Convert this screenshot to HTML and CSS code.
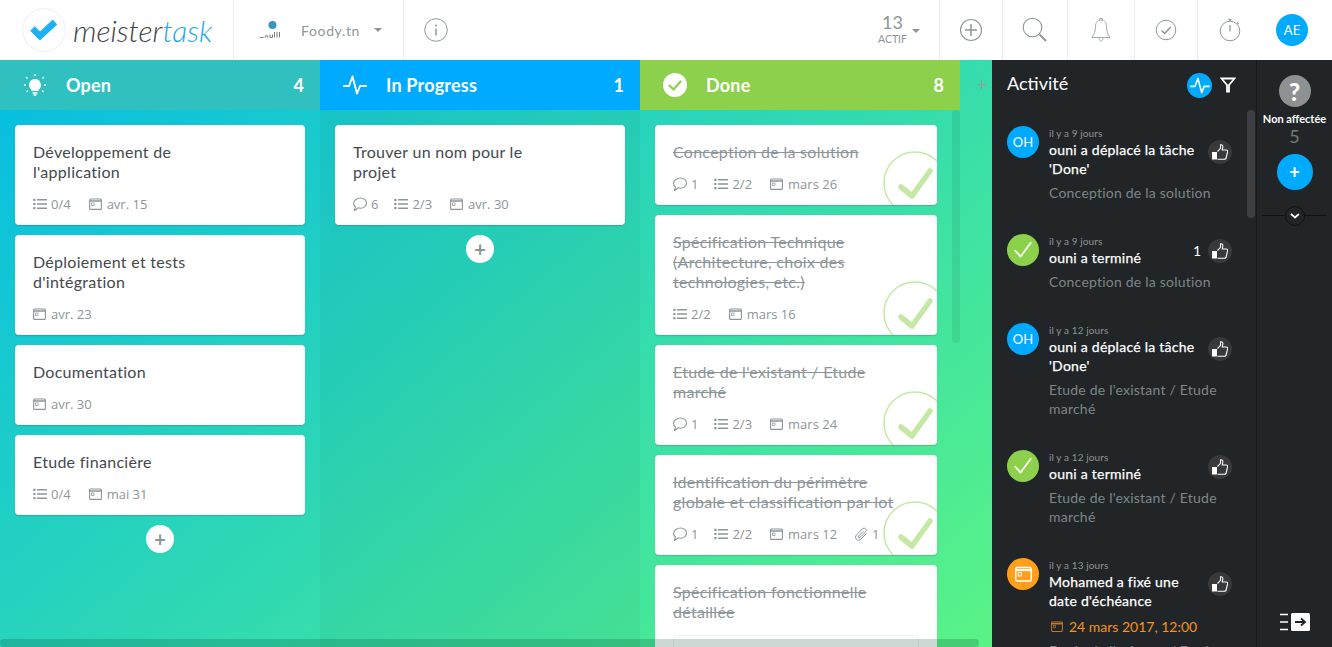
FILE: index.html
```html
<!DOCTYPE html>
<html lang="fr">
<head>
<meta charset="utf-8">
<title>MeisterTask</title>
<link rel="stylesheet" href="styles.css">
</head>
<body>
<svg class="defs" width="0" height="0">
  <defs>
    <symbol id="i-comment" viewBox="0 0 14 14"><path d="M7.500 1c3.100 0 6 2.100 6 5.200s-2.900 5-6 5c-.8 0-1.500-.1-2.200-.4L1.500 13.500l.9-3.700C1.200 8.900.6 7.600.6 6.200.6 3.100 4.400 1 7.500 1z" fill="none" stroke="currentColor" stroke-width="1.100"/></symbol>
    <symbol id="i-list" viewBox="0 0 14 12"><path d="M4 1.800h10M4 6h10M4 10.200h10" stroke="currentColor" stroke-width="1.500" fill="none"/><path d="M.3.800h2.200V3H.3zM.3 4.900h2.200v2.200H.3zM.3 9h2.200v2.200H.3z" fill="currentColor"/></symbol>
    <symbol id="i-cal" viewBox="0 0 13 12"><rect x=".6" y="1" width="11.800" height="10.400" rx="1" fill="none" stroke="currentColor" stroke-width="1.100"/><path d="M.6 3h11.800" stroke="currentColor" stroke-width="1.600"/><rect x="2.500" y="5" width="2.500" height="2.500" fill="none" stroke="currentColor" stroke-width=".7"/></symbol>
    <symbol id="i-clip" viewBox="0 0 14 14"><path d="M12.500 6.500 7 12c-1.300 1.300-3.400 1.500-4.600.3S1.300 9 2.600 7.800l5.700-5.900c1-.9 2.400-1 3.300-.1s.8 2.200-.1 3.100L6 10.500c-.4.400-1.100.5-1.500.1s-.3-1.100.1-1.500l4.900-5" fill="none" stroke="currentColor" stroke-width="1"/></symbol>
    <symbol id="i-thumb" viewBox="0 0 16 16"><path d="M0 8h5v7.500H0z" fill="currentColor"/><path d="M5.500 7.500 8.500 4.300V.9c1.500-.4 2.500.6 2.300 2.100L10.300 6h4c1.100 0 1.600.9 1.300 1.800l-1.500 6.200c-.2.800-.7 1.200-1.500 1.200H5.500" fill="none" stroke="currentColor" stroke-width="1.100"/></symbol>
    <symbol id="i-pulse" viewBox="0 0 24 20"><path d="M1 11h5l3.500-9.500 4.500 17 3-7.500h6" fill="none" stroke="currentColor" stroke-width="1.900" stroke-linecap="round" stroke-linejoin="round"/></symbol>
    <symbol id="i-done" viewBox="0 0 64 64"><circle cx="32" cy="32" r="31" fill="none" stroke="currentColor" stroke-width="1.500"/><path d="M18 36l11 9 18-25" fill="none" stroke="currentColor" stroke-width="5.500" stroke-linecap="round" stroke-linejoin="round"/></symbol>
    <symbol id="i-check" viewBox="0 0 20 20"><path d="M3.500 10.500l4.500 5L16.500 4" fill="none" stroke="currentColor" stroke-width="1.400" stroke-linecap="round" stroke-linejoin="round"/></symbol>
  </defs>
</svg>
<div class="app">
  <header class="topbar">
    <div class="brand">
      <span class="logo-mark">
        <svg viewBox="0 0 44 44" width="44" height="44"><circle cx="22" cy="22" r="21.300" fill="#fff" stroke="#eceef0"/><path d="M10.500 20.500l7.500 7.500 15-14" fill="none" stroke="#1cb0f6" stroke-width="6.500" stroke-linejoin="miter"/></svg>
      </span>
      <span class="wordmark">meister<span class="wordmark-task">task</span></span>
    </div>
    <div class="project">
      <svg class="project-logo" viewBox="0 0 22 18" width="22" height="18"><circle cx="13.500" cy="4" r="4" fill="#3a94bd"/><path d="M1 16.500h3.500M6 16.500c.5-3 2-3 2-1.500s1 1.500 1 0M11 13.500v3h2.500v-3M15.500 11v5.500M18 11v5.500M20.500 11v5.500" stroke="#777c80" stroke-width="1" fill="none"/></svg>
      <span class="project-name">Foody.tn</span>
      <span class="caret"></span>
    </div>
    <div class="info-cell">
      <svg viewBox="0 0 24 24" width="24" height="24"><circle cx="12" cy="12" r="11.300" fill="none" stroke="#8f979b" stroke-width="1"/><path d="M12 10.500v7" stroke="#8f979b" stroke-width="1.500"/><circle cx="12" cy="7.500" r="1" fill="#8f979b"/></svg>
      <span class="active-num"><b class="active-count">13</b><small class="active-label">ACTIF</small></span>
      <span class="caret active-caret"></span>
    </div>
    <div class="tool tool-plus">
      <svg viewBox="0 0 24 24" width="24" height="24"><circle cx="12" cy="12" r="10.500" fill="none" stroke="#8f979b" stroke-width="1.100"/><path d="M12 6v12M6 12h12" stroke="#8f979b" stroke-width="1.500"/></svg>
    </div>
    <div class="tool tool-search">
      <svg viewBox="0 0 26 26" width="26" height="26"><circle cx="10.500" cy="10.500" r="9.300" fill="none" stroke="#8f979b" stroke-width="1.100"/><path d="M17.500 17.500l6.500 6.500" stroke="#8f979b" stroke-width="2"/></svg>
    </div>
    <div class="tool tool-bell">
      <svg viewBox="0 0 20 26" width="20" height="26"><path d="M10 3c-3.500 0-5.500 2.500-5.500 6.500 0 5-1.500 8-3.500 11h18c-2-3-3.500-6-3.500-11C15.500 5.500 13.500 3 10 3zM8.500 3V1.500h3V3M8 21c0 2 1 3 2 3s2-1 2-3" fill="none" stroke="#a3aaae" stroke-width="1"/></svg>
    </div>
    <div class="tool tool-check">
      <svg viewBox="0 0 22 22" width="22" height="22"><circle cx="11" cy="11" r="9.800" fill="none" stroke="#8f979b" stroke-width="1"/><path d="M6.500 11.500l3.200 3 6-6.500" fill="none" stroke="#8f979b" stroke-width="1.500"/></svg>
    </div>
    <div class="tool tool-timer">
      <svg viewBox="0 0 22 24" width="22" height="24"><circle cx="11" cy="13" r="9.800" fill="none" stroke="#8f979b" stroke-width="1"/><path d="M11 7v6.500" stroke="#8f979b" stroke-width="1.300"/><path d="M9.500 1.500h3M11 1.500v1.500M18 4.500l1.500 1.500" stroke="#8f979b" stroke-width="1.300"/></svg>
    </div>
    <div class="tool tool-user"><span class="avatar avatar-blue">AE</span></div>
  </header>

  <main class="workspace">
    <section class="board">
      <div class="column">
        <div class="col-head col-open">
          <svg class="col-icon" viewBox="0 0 24 24" width="24" height="24"><path d="M12 6a6 6 0 0 0-3.500 10.800V18h7v-1.200A6 6 0 0 0 12 6z" fill="#fff"/><path d="M9.500 20h5M10.500 22h3M12 1v2M3 4l1.500 1.500M21 4l-1.500 1.500M1 12h2M21 12h2M3.500 19l1.500-1.500M20.500 19 19 17.500" stroke="#fff" stroke-width="1.300" fill="none"/></svg>
          <h2 class="col-title">Open</h2><span class="col-count">4</span>
        </div>
        <div class="col-body">
          <article class="card">
            <h3 class="card-title">Développement de<br>l'application</h3>
            <div class="meta"><span class="m"><svg class="mi"><use href="#i-list"/></svg>0/4</span><span class="m"><svg class="mi mi-cal"><use href="#i-cal"/></svg>avr. 15</span></div>
          </article>
          <article class="card">
            <h3 class="card-title">Déploiement et tests<br>d'intégration</h3>
            <div class="meta"><span class="m"><svg class="mi mi-cal"><use href="#i-cal"/></svg>avr. 23</span></div>
          </article>
          <article class="card">
            <h3 class="card-title">Documentation</h3>
            <div class="meta"><span class="m"><svg class="mi mi-cal"><use href="#i-cal"/></svg>avr. 30</span></div>
          </article>
          <article class="card">
            <h3 class="card-title">Etude financière</h3>
            <div class="meta"><span class="m"><svg class="mi"><use href="#i-list"/></svg>0/4</span><span class="m"><svg class="mi mi-cal"><use href="#i-cal"/></svg>mai 31</span></div>
          </article>
          <button class="add-card" type="button">+</button>
        </div>
      </div>

      <div class="column column-alt">
        <div class="col-head col-progress">
          <svg class="col-icon" width="24" height="20"><use href="#i-pulse"/></svg>
          <h2 class="col-title">In Progress</h2><span class="col-count">1</span>
        </div>
        <div class="col-body">
          <article class="card">
            <h3 class="card-title">Trouver un nom pour le<br>projet</h3>
            <div class="meta"><span class="m"><svg class="mi"><use href="#i-comment"/></svg>6</span><span class="m"><svg class="mi"><use href="#i-list"/></svg>2/3</span><span class="m"><svg class="mi mi-cal"><use href="#i-cal"/></svg>avr. 30</span></div>
          </article>
          <button class="add-card" type="button">+</button>
        </div>
      </div>

      <div class="column column-done">
        <div class="col-head col-done">
          <svg class="col-icon" viewBox="0 0 24 24" width="24" height="24"><circle cx="12" cy="12" r="12" fill="#fff"/><path d="M6.500 12.500l4 4 7-8" fill="none" stroke="#8cd04b" stroke-width="2.200" stroke-linecap="round" stroke-linejoin="round"/></svg>
          <h2 class="col-title">Done</h2><span class="col-count">8</span>
        </div>
        <div class="col-body col-body-done">
          <article class="card card-done">
            <h3 class="card-title">Conception de la solution</h3>
            <div class="meta"><span class="m"><svg class="mi"><use href="#i-comment"/></svg>1</span><span class="m"><svg class="mi"><use href="#i-list"/></svg>2/2</span><span class="m"><svg class="mi mi-cal"><use href="#i-cal"/></svg>mars 26</span></div>
            <svg class="done-mark"><use href="#i-done"/></svg>
          </article>
          <article class="card card-done">
            <h3 class="card-title">Spécification Technique<br>(Architecture, choix des<br>technologies, etc.)</h3>
            <div class="meta"><span class="m"><svg class="mi"><use href="#i-list"/></svg>2/2</span><span class="m"><svg class="mi mi-cal"><use href="#i-cal"/></svg>mars 16</span></div>
            <svg class="done-mark"><use href="#i-done"/></svg>
          </article>
          <article class="card card-done">
            <h3 class="card-title">Etude de l'existant / Etude<br>marché</h3>
            <div class="meta"><span class="m"><svg class="mi"><use href="#i-comment"/></svg>1</span><span class="m"><svg class="mi"><use href="#i-list"/></svg>2/3</span><span class="m"><svg class="mi mi-cal"><use href="#i-cal"/></svg>mars 24</span></div>
            <svg class="done-mark"><use href="#i-done"/></svg>
          </article>
          <article class="card card-done">
            <h3 class="card-title">Identification du périmètre<br>globale et classification par lot</h3>
            <div class="meta"><span class="m"><svg class="mi"><use href="#i-comment"/></svg>1</span><span class="m"><svg class="mi"><use href="#i-list"/></svg>2/2</span><span class="m"><svg class="mi mi-cal"><use href="#i-cal"/></svg>mars 12</span><span class="m m-clip"><svg class="mi"><use href="#i-clip"/></svg>1</span></div>
            <svg class="done-mark"><use href="#i-done"/></svg>
          </article>
          <article class="card card-done card-open-end">
            <h3 class="card-title">Spécification fonctionnelle<br>détaillée</h3>
            <div class="preview"></div>
          </article>
          <span class="v-scroll"></span>
        </div>
      </div>

      <div class="new-col"><span class="new-col-head">+</span></div>
      <span class="h-scroll"></span>
    </section>

    <aside class="activity">
      <div class="activity-head">
        <h2 class="activity-title">Activité</h2>
        <span class="pulse-btn"><svg width="20" height="17"><use href="#i-pulse"/></svg></span>
        <svg class="filter" viewBox="0 0 16 16" width="16" height="16"><path d="M1.500 1.500h13L9 8v6.500H7V8z" fill="none" stroke="#fff" stroke-width="1.800"/></svg>
      </div>
      <div class="feed">
        <div class="item">
          <span class="avatar avatar-blue">OH</span>
          <div class="item-main">
            <div class="item-top"><div class="item-text"><div class="time">il y a 9 jours</div><div class="what">ouni a déplacé la tâche 'Done'</div></div><span class="like"><svg width="16" height="16"><use href="#i-thumb"/></svg></span></div>
            <div class="sub">Conception de la solution</div>
          </div>
        </div>
        <div class="item">
          <span class="avatar avatar-green"><svg width="24" height="24"><use href="#i-check"/></svg></span>
          <div class="item-main">
            <div class="item-top"><div class="item-text"><div class="time">il y a 9 jours</div><div class="what">ouni a terminé</div></div><span class="like-count">1</span><span class="like"><svg width="16" height="16"><use href="#i-thumb"/></svg></span></div>
            <div class="sub">Conception de la solution</div>
          </div>
        </div>
        <div class="item">
          <span class="avatar avatar-blue">OH</span>
          <div class="item-main">
            <div class="item-top"><div class="item-text"><div class="time">il y a 12 jours</div><div class="what">ouni a déplacé la tâche 'Done'</div></div><span class="like"><svg width="16" height="16"><use href="#i-thumb"/></svg></span></div>
            <div class="sub">Etude de l'existant / Etude marché</div>
          </div>
        </div>
        <div class="item">
          <span class="avatar avatar-green"><svg width="24" height="24"><use href="#i-check"/></svg></span>
          <div class="item-main">
            <div class="item-top"><div class="item-text"><div class="time">il y a 12 jours</div><div class="what">ouni a terminé</div></div><span class="like"><svg width="16" height="16"><use href="#i-thumb"/></svg></span></div>
            <div class="sub">Etude de l'existant / Etude marché</div>
          </div>
        </div>
        <div class="item">
          <span class="avatar avatar-orange"><svg class="cal-lg"><use href="#i-cal"/></svg></span>
          <div class="item-main">
            <div class="item-top"><div class="item-text"><div class="time">il y a 13 jours</div><div class="what">Mohamed a fixé une date d'échéance</div></div><span class="like"><svg width="16" height="16"><use href="#i-thumb"/></svg></span></div>
            <div class="due"><svg class="due-icon"><use href="#i-cal"/></svg>24 mars 2017, 12:00</div>
            <div class="sub">Etude de l'existant / Etude marché</div>
          </div>
        </div>
        <span class="feed-scroll"></span>
      </div>
    </aside>

    <aside class="people">
      <span class="unknown">?</span>
      <div class="people-label">Non affectée</div>
      <div class="people-count">5</div>
      <button class="people-add" type="button">+</button>
      <div class="people-sep"><span class="people-chev"><svg viewBox="0 0 10 6" width="10" height="6"><path d="M1 1l4 3.500L9 1" fill="none" stroke="#fff" stroke-width="1.800"/></svg></span></div>
      <svg class="collapse" viewBox="0 0 30 18" width="30" height="18"><path d="M0 1.500h8M0 9h8M0 16.500h8" stroke="#fff" stroke-width="1.500"/><rect x="11" y="0" width="19" height="18" rx="1.500" fill="#fff"/><path d="M15 9h10M21 5.500 25 9l-4 3.500" stroke="#212527" stroke-width="1.800" fill="none"/></svg>
    </aside>
  </main>
</div>
</body>
</html>
```

FILE: styles.css
```css
* { box-sizing: border-box; }
html, body { margin: 0; height: 100%; overflow: hidden; }
body { font-family: "Lato", "Open Sans", sans-serif; color: #3e4449; background: #fff; }
.defs { position: absolute; }
h2, h3 { margin: 0; font-weight: normal; }
button { font-family: inherit; border: 0; padding: 0; cursor: pointer; }
.app { display: flex; flex-direction: column; height: 647px; }

/* top bar */
.topbar { display: flex; height: 60px; flex: none; background: #fff; }
.brand { width: 234px; padding-left: 22px; display: flex; align-items: center; border-right: 1px solid #e9eced; }
.logo-mark { display: flex; width: 44px; height: 44px; margin-right: 7px; }
.wordmark { font-size: 30px; font-weight: 300; font-style: italic; color: #3c4349; }
.wordmark-task { color: #1aa7f0; }
.project { width: 170px; display: flex; align-items: center; padding-left: 25px; border-right: 1px solid #e9eced; }
.project-logo { margin-right: 20px; }
.project-name { font-size: 14px; color: #8d9599; letter-spacing: .65px; }
.caret { width: 0; height: 0; border: 4.500px solid transparent; border-top: 4.500px solid #8d9599; border-bottom: 0; margin-left: 14px; }
.info-cell { width: 536px; flex: none; display: flex; align-items: center; padding-left: 20px; border-right: 1px solid #e9eced; position: relative; }
.active-num { position: absolute; right: 32px; top: 12px; display: flex; flex-direction: column; align-items: center; color: #8d9599; }
.active-count { font-size: 18px; font-weight: 400; line-height: 20px; }
.active-label { font-size: 10.500px; line-height: 12px; margin-top: 1px; }
.active-caret { position: absolute; right: 19px; top: 29px; margin: 0; }
.tool { display: flex; align-items: center; justify-content: center; border-right: 1px solid #e9eced; }
.tool-plus { width: 63px; }
.tool-search { width: 65px; }
.tool-bell { width: 67px; }
.tool-check { width: 63px; }
.tool-timer { width: 63px; border-right: 0; }
.tool-user { width: 71px; border-right: 0; padding-right: 9px; }

.avatar { width: 32px; height: 32px; flex: none; border-radius: 50%; display: flex; align-items: center; justify-content: center; color: #fff; font-size: 13px; }
.avatar-blue { background: #00aaff; }
.avatar-green { background: #8cd04b; }
.avatar-orange { background: #ff9f1a; }
.cal-lg { width: 17px; height: 16px; }

/* board */
.workspace { flex: 1; display: flex; min-height: 0; }
.board { width: 992px; flex: none; display: flex; position: relative; overflow: hidden; background: linear-gradient(140deg, #06bde4 0%, #2ed8b4 50%, #5af386 100%); }
.column { width: 320px; flex: none; display: flex; flex-direction: column; }
.column-alt { background: rgba(0, 0, 0, .03); }
.col-head { height: 50px; flex: none; display: flex; align-items: center; padding: 0 16px 0 23px; color: #fff; }
.col-open { background: #30c0bf; }
.col-progress { background: #00aaff; }
.col-done { background: #8cd04b; }
.col-icon { width: 24px; flex: none; margin-right: 19px; }
.col-title { flex: 1; font-size: 18px; font-weight: 700; letter-spacing: .2px; }
.col-count { font-size: 18px; font-weight: 700; }
.col-body { padding: 15px; display: flex; flex-direction: column; gap: 10px; flex: 1; min-height: 0; position: relative; }
.col-body-done { padding-right: 23px; }

/* cards */
.card { background: #fff; border-radius: 4px; padding: 17px 18px 12px; position: relative; overflow: hidden; box-shadow: 0 1px 1px rgba(0, 0, 0, .15); flex: none; }
.card-title { font-size: 16px; line-height: 20px; letter-spacing: .28px; color: #44494e; margin-bottom: 13px; }
.meta { display: flex; gap: 16px; line-height: 18px; color: #8d9599; font-family: "Open Sans", sans-serif; font-size: 13px; }
.m { display: flex; align-items: center; }
.mi { width: 14px; height: 14px; margin-right: 4px; flex: none; color: #8d9599; }
.mi-cal { width: 13px; height: 12px; margin-right: 5px; }
.m + .m .mi-cal { margin-left: 2px; margin-right: 5px; }
.m-clip { margin-left: 1px; }
.card-done .card-title { text-decoration: line-through; color: #8d9599; }
.done-mark { position: absolute; right: -10px; bottom: -10px; width: 64px; height: 64px; color: #c5e8a5; }
.preview { height: 60px; border: 1px solid #eef0f1; border-radius: 4px; margin-top: 3px; }
.card-open-end { height: 140px; }
.add-card { width: 28px; height: 28px; border-radius: 50%; background: #fff; color: #8d9599; font-size: 20px; font-weight: 700; line-height: 26px; align-self: center; }
.v-scroll { position: absolute; left: 312px; top: 0; width: 8px; height: 233px; border-radius: 4px; background: rgba(0, 0, 0, .07); }
.new-col { width: 32px; flex: none; }
.new-col-head { display: block; height: 50px; line-height: 50px; padding-left: 17px; font-size: 17px; color: #94a09e; }
.h-scroll { position: absolute; left: 0; bottom: 0; width: 979px; height: 8px; border-radius: 4px; background: rgba(0, 60, 40, .2); }

/* activity */
.activity { width: 265px; flex: none; background: #212527; border-right: 1px solid #17191b; display: flex; flex-direction: column; color: #fff; min-height: 0; }
.activity-head { height: 50px; flex: none; display: flex; align-items: center; padding: 0 20px 0 15px; }
.activity-title { flex: 1; font-size: 18px; margin-top: -4px; }
.pulse-btn { width: 25px; height: 25px; border-radius: 50%; background: #00aaff; display: flex; align-items: center; justify-content: center; margin-right: 8px; }
.feed { flex: 1; position: relative; overflow: hidden; padding: 16px 24px 0 15px; }
.item { display: flex; gap: 10px; margin-bottom: 32px; }
.item-main { flex: 1; min-width: 0; }
.item-top { display: flex; align-items: center; }
.item-text { flex: 1; min-width: 0; padding-right: 13px; }
.time { font-size: 10px; line-height: 14px; letter-spacing: .1px; color: #8d9599; }
.what { font-size: 14px; line-height: 19px; letter-spacing: .25px; color: #fff; -webkit-text-stroke: .25px #fff; }
.sub { font-size: 14px; line-height: 19px; letter-spacing: .22px; margin-top: 5px; color: #7d8589; }
.due { font-size: 14px; line-height: 19px; margin-top: 7px; color: #f7931e; display: flex; align-items: center; padding-left: 2px; }
.due-icon { width: 12px; height: 11px; margin-right: 6px; color: #c07a25; }
.like { width: 24px; height: 24px; flex: none; border-radius: 50%; background: #37393b; display: flex; align-items: center; justify-content: center; color: #fff; }
.like-count { font-size: 14px; margin-right: 7px; }
.feed-scroll { position: absolute; right: 1px; top: 0; width: 8px; height: 108px; border-radius: 4px; background: #3c4043; }

/* people */
.people { width: 75px; flex: none; background: #212527; display: flex; flex-direction: column; align-items: center; position: relative; padding-top: 15px; color: #fff; }
.unknown { width: 32px; height: 32px; border-radius: 50%; background: #8d9194; font-size: 24px; font-weight: 900; display: flex; align-items: center; justify-content: center; }
.people-label { font-size: 11px; font-weight: 700; margin-top: 6px; line-height: 12px; white-space: nowrap; }
.people-count { font-size: 18px; line-height: 22px; color: #737a7e; }
.people-add { width: 36px; height: 36px; border-radius: 50%; background: #00aaff; color: #fff; font-size: 18px; font-weight: 700; line-height: 34px; margin-top: 7px; }
.people-sep { width: 65px; height: 1px; background: #0f1112; margin-top: 25px; display: flex; justify-content: center; align-items: center; }
.people-chev { width: 20px; height: 20px; flex: none; border-radius: 50%; background: #212527; border: 1px solid #0f1112; display: flex; align-items: center; justify-content: center; }
.collapse { position: absolute; left: 23px; bottom: 16px; }
.filter { flex: none; }
```
